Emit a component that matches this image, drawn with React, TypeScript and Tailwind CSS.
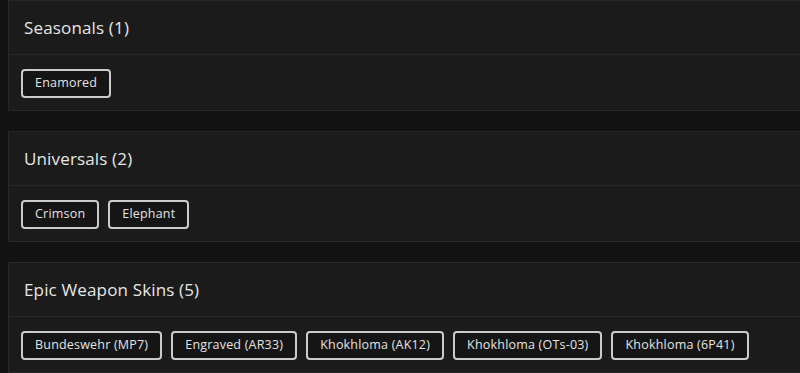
const sections = [
  { title: 'Seasonals', items: ['Enamored'] },
  { title: 'Universals', items: ['Crimson', 'Elephant'] },
  {
    title: 'Epic Weapon Skins',
    items: ['Bundeswehr (MP7)', 'Engraved (AR33)', 'Khokhloma (AK12)', 'Khokhloma (OTs-03)', 'Khokhloma (6P41)'],
  },
];

function Section({ title, items }: { title: string; items: string[] }) {
  return (
    <section className="ml-2 -mr-2 border border-[#272727] bg-[#1b1b1b]">
      <div className="flex h-[54px] items-center border-b border-[#292929] px-[15px]">
        <h2 className="text-[17px] font-medium tracking-[0.15px] text-[#e6e6e6]">
          {title} ({items.length})
        </h2>
      </div>
      <div className="flex h-[55px] items-center gap-[9px] px-3 pt-[1px]">
        {items.map((item) => (
          <span
            key={item}
            className="flex h-[29px] items-center rounded-[4px] border-2 border-[#cbcbcb] bg-[#151515] px-3 text-[12.5px] tracking-[0.2px] text-[#e4e4e4]"
          >
            {item}
          </span>
        ))}
      </div>
    </section>
  );
}

export default function App() {
  return (
    <div
      className="flex h-[373px] flex-col gap-[20px] overflow-hidden bg-[#121212]"
      style={{ fontFamily: '"Open Sans", "Noto Sans", sans-serif' }}
    >
      {sections.map((s) => (
        <Section key={s.title} title={s.title} items={s.items} />
      ))}
    </div>
  );
}
